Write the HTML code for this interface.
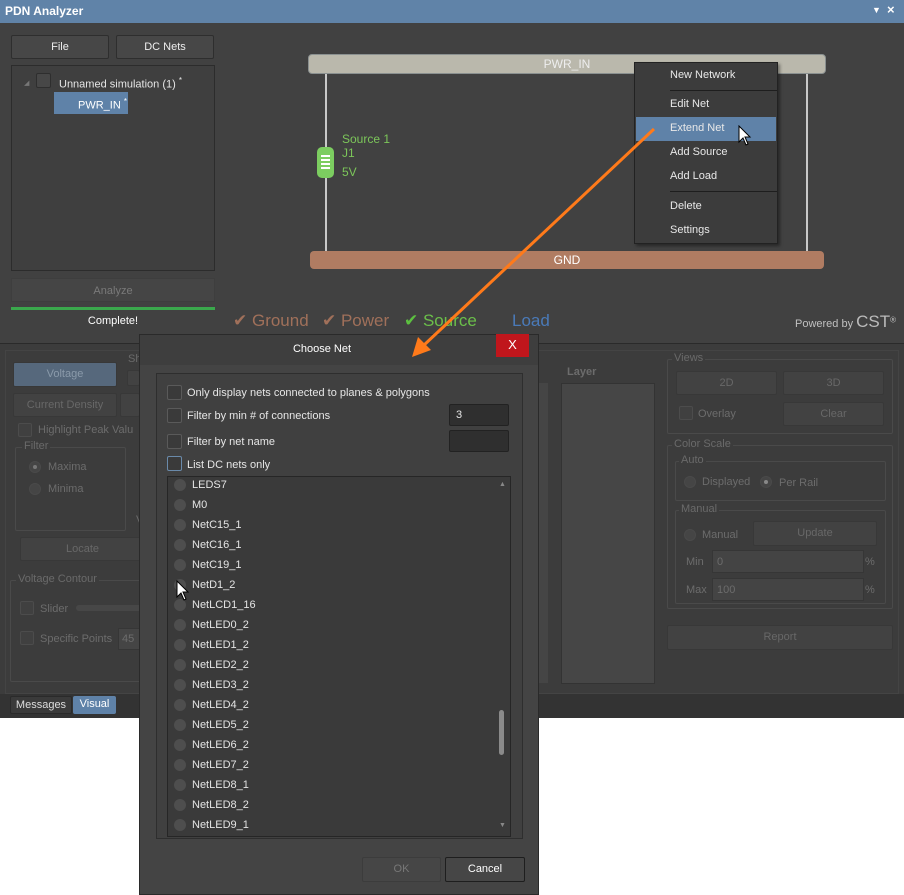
<!DOCTYPE html>
<html><head><style>
*{box-sizing:border-box;margin:0;padding:0}
body{width:904px;height:895px;background:#fff;position:relative;overflow:hidden;font-family:"Liberation Sans",sans-serif;font-size:11px;color:#e6e6e6}
.a{position:absolute}
.btn{position:absolute;background:#474747;border:1px solid #2e2e2e;border-radius:2px;text-align:center;color:#eee;font-size:11px}
.d{color:#6c6c6c}
.dbtn{position:absolute;background:#424242;border:1px solid #383838;border-radius:2px;text-align:center;color:#686868;font-size:11px}
.grp{position:absolute;border:1px solid #4a4a4a;border-radius:2px}
.lg{position:absolute;background:#3c3c3c;padding:0 2px;color:#6a6a6a}
.cb{position:absolute;width:14px;height:14px;border:1px solid #4c4c4c;background:#404040;border-radius:2px}
.rd{position:absolute;width:12px;height:12px;border-radius:50%;background:#454545;border:1px solid #4a4a4a}
.mi{position:absolute;left:36px;color:#e8e8e8;font-size:11px}
.li{position:absolute;left:5px;height:20px;width:300px;color:#e4e4e4;font-size:11px;line-height:20px}
.li i{position:absolute;left:1px;top:4px;width:12px;height:12px;border-radius:50%;background:#4e4e4e}
.li span{position:absolute;left:19px}
.dcb{position:absolute;width:15px;height:15px;border:1px solid #5a5a5a;background:#3a3a3a;border-radius:2px}
</style></head><body>
<!-- title -->
<div class="a" style="left:0;top:0;width:904px;height:23px;background:#6083a8"></div>
<div class="a" style="left:5px;top:4px;font-weight:bold;font-size:12px;color:#fff">PDN Analyzer</div>
<div class="a" style="left:872px;top:5px;font-size:9px;color:#fff">▼</div>
<div class="a" style="left:887px;top:2px;font-size:13px;color:#fff;font-weight:bold">×</div>
<!-- main -->
<div class="a" style="left:0;top:23px;width:904px;height:320px;background:#414141"></div>
<div class="btn" style="left:11px;top:35px;width:98px;height:24px;line-height:22px">File</div>
<div class="btn" style="left:116px;top:35px;width:98px;height:24px;line-height:22px">DC Nets</div>
<div class="a" style="left:11px;top:65px;width:204px;height:206px;border:1px solid #2c2c2c;background:#3f3f3f"></div>
<div class="a" style="left:24px;top:79px;font-size:7px;color:#777">◢</div>
<div class="a" style="left:36px;top:73px;width:15px;height:15px;border:1px solid #2e2e2e;background:#474747;border-radius:2px"></div>
<div class="a" style="left:59px;top:76px;font-size:11px">Unnamed simulation (1) <sup style="font-size:8px">*</sup></div>
<div class="a" style="left:54px;top:92px;width:74px;height:22px;background:#5f82a8"></div>
<div class="a" style="left:78px;top:97px;color:#fff">PWR_IN <sup style="font-size:8px">*</sup></div>
<div class="a" style="left:11px;top:278px;width:204px;height:24px;background:#454545;border:1px solid #3e3e3e;text-align:center;line-height:24px;color:#7a7a7a">Analyze</div>
<div class="a" style="left:11px;top:307px;width:204px;height:3px;background:#3aa84c"></div>
<div class="a" style="left:0;top:315px;width:226px;text-align:center;color:#fff;font-size:11px">Complete!</div>
<!-- diagram -->
<div class="a" style="left:308px;top:54px;width:518px;height:20px;background:#bab8ac;border:1px solid #8a9090;border-radius:4px;text-align:center;color:#eee;line-height:18px;font-size:12px">PWR_IN</div>
<div class="a" style="left:325px;top:74px;width:2px;height:178px;background:#c8c8c8"></div>
<div class="a" style="left:806px;top:74px;width:2px;height:178px;background:#c8c8c8"></div>
<div class="a" style="left:310px;top:251px;width:514px;height:18px;background:#b07c62;border-radius:4px;text-align:center;color:#fff;line-height:18px;font-size:12px">GND</div>
<div class="a" style="left:317px;top:147px;width:17px;height:31px;background:#7ccd60;border-radius:5px"></div>
<div class="a" style="left:321px;top:155px;width:9px;height:2px;background:#fff;box-shadow:0 4px 0 #fff,0 8px 0 #fff,0 12px 0 #fff"></div>
<div class="a" style="left:342px;top:132px;color:#7cc65a;font-size:12px;line-height:14px">Source 1<br>J1</div>
<div class="a" style="left:342px;top:165px;color:#7cc65a;font-size:12px">5V</div>
<!-- legend -->
<div class="a" style="left:233px;top:311px;font-size:17px;color:#a0705a">✔ Ground</div>
<div class="a" style="left:322px;top:311px;font-size:17px;color:#a0705a">✔ Power</div>
<div class="a" style="left:404px;top:311px;font-size:17px;color:#6bbf4a"><span style="color:#5cc040">✔</span> Source</div>
<div class="a" style="left:512px;top:311px;font-size:17px;color:#4a7ab8">Load</div>
<div class="a" style="left:795px;top:312px;font-size:11px;color:#c0c0c0">Powered by <span style="font-size:17px;color:#bbb">CST</span><sup style="font-size:8px">®</sup></div>
<!-- context menu -->
<div class="a" style="left:634px;top:62px;width:144px;height:182px;background:#3c3c3c;border:1px solid #222;box-shadow:2px 2px 3px rgba(0,0,0,.4)"></div>
<div class="a" style="left:670px;top:90px;width:107px;height:1px;background:#1e1e1e"></div>
<div class="a" style="left:670px;top:191px;width:107px;height:1px;background:#1e1e1e"></div>
<div class="a" style="left:636px;top:117px;width:140px;height:24px;background:#5f82a8"></div>
<div class="a" style="left:634px;top:64px;width:144px">
<div class="mi" style="top:5px">New Network</div>
<div class="mi" style="top:34px">Edit Net</div>
<div class="mi" style="top:58px">Extend Net</div>
<div class="mi" style="top:82px">Add Source</div>
<div class="mi" style="top:106px">Add Load</div>
<div class="mi" style="top:136px">Delete</div>
<div class="mi" style="top:160px">Settings</div>
</div>
<svg class="a" style="left:738px;top:125px" width="14" height="22"><path d="M1 1 L1 17 L5 13 L8 20 L10 19 L7 12 L12 12 Z" fill="#fff" stroke="#000" stroke-width="1"/></svg>
<!-- lower dimmed panel -->
<div class="a" style="left:0;top:343px;width:904px;height:375px;background:#3c3c3c;border-top:1px solid #2a2a2a"></div>
<div class="a" style="left:5px;top:350px;width:894px;height:344px;border:1px solid #444"></div>
<div class="dbtn" style="left:13px;top:362px;width:104px;height:25px;line-height:23px;background:#56687c;color:#8a9aaa">Voltage</div>
<div class="dbtn" style="left:13px;top:393px;width:104px;height:24px;line-height:22px">Current Density</div>
<div class="dbtn" style="left:120px;top:393px;width:20px;height:24px"></div>
<div class="dbtn" style="left:127px;top:370px;width:13px;height:16px"></div>
<div class="lg" style="left:126px;top:353px">Sh</div>
<div class="cb" style="left:18px;top:423px"></div>
<div class="a d" style="left:38px;top:424px">Highlight Peak Valu</div>
<div class="grp" style="left:15px;top:447px;width:111px;height:84px"></div>
<div class="lg" style="left:22px;top:440px">Filter</div>
<div class="rd" style="left:29px;top:461px"></div><div class="a" style="left:33px;top:465px;width:4px;height:4px;border-radius:50%;background:#777"></div>
<div class="a d" style="left:48px;top:461px">Maxima</div>
<div class="rd" style="left:29px;top:483px"></div>
<div class="a d" style="left:48px;top:483px">Minima</div>
<div class="a d" style="left:136px;top:514px">V</div>
<div class="dbtn" style="left:20px;top:537px;width:125px;height:24px;line-height:22px">Locate</div>
<div class="grp" style="left:10px;top:580px;width:135px;height:102px"></div>
<div class="lg" style="left:16px;top:573px">Voltage Contour</div>
<div class="cb" style="left:20px;top:601px"></div>
<div class="a d" style="left:40px;top:603px">Slider</div>
<div class="a" style="left:76px;top:605px;width:70px;height:6px;background:#474747;border-radius:3px"></div>
<div class="cb" style="left:20px;top:631px"></div>
<div class="a d" style="left:40px;top:633px">Specific Points</div>
<div class="a" style="left:118px;top:628px;width:30px;height:22px;background:#454545;border:1px solid #363636;color:#6c6c6c;padding:4px 3px">45</div>
<div class="a" style="left:538px;top:383px;width:10px;height:300px;background:#454545"></div>
<div class="a d" style="left:567px;top:366px;font-weight:bold">Layer</div>
<div class="a" style="left:561px;top:383px;width:94px;height:301px;background:#464646;border:1px solid #333"></div>
<div class="grp" style="left:667px;top:359px;width:226px;height:75px"></div>
<div class="lg" style="left:672px;top:352px">Views</div>
<div class="dbtn" style="left:676px;top:371px;width:101px;height:24px;line-height:22px">2D</div>
<div class="dbtn" style="left:783px;top:371px;width:101px;height:24px;line-height:22px">3D</div>
<div class="cb" style="left:679px;top:406px"></div>
<div class="a d" style="left:698px;top:408px">Overlay</div>
<div class="dbtn" style="left:783px;top:402px;width:101px;height:24px;line-height:22px">Clear</div>
<div class="grp" style="left:667px;top:445px;width:226px;height:164px"></div>
<div class="lg" style="left:672px;top:438px">Color Scale</div>
<div class="grp" style="left:675px;top:461px;width:211px;height:40px"></div>
<div class="lg" style="left:679px;top:454px">Auto</div>
<div class="rd" style="left:684px;top:476px"></div>
<div class="a d" style="left:702px;top:476px">Displayed</div>
<div class="rd" style="left:760px;top:476px"></div><div class="a" style="left:764px;top:480px;width:4px;height:4px;border-radius:50%;background:#888"></div>
<div class="a d" style="left:779px;top:477px">Per Rail</div>
<div class="grp" style="left:675px;top:510px;width:211px;height:94px"></div>
<div class="lg" style="left:679px;top:503px">Manual</div>
<div class="rd" style="left:684px;top:529px"></div>
<div class="a d" style="left:702px;top:529px">Manual</div>
<div class="dbtn" style="left:753px;top:521px;width:124px;height:25px;line-height:23px">Update</div>
<div class="a d" style="left:686px;top:556px">Min</div>
<div class="a" style="left:712px;top:550px;width:152px;height:23px;background:#444;border:1px solid #363636;color:#6c6c6c;padding:5px 4px">0</div>
<div class="a d" style="left:865px;top:556px">%</div>
<div class="a d" style="left:686px;top:584px">Max</div>
<div class="a" style="left:712px;top:578px;width:152px;height:23px;background:#444;border:1px solid #363636;color:#6c6c6c;padding:5px 4px">100</div>
<div class="a d" style="left:865px;top:584px">%</div>
<div class="dbtn" style="left:667px;top:625px;width:226px;height:25px;line-height:23px">Report</div>
<div class="a" style="left:0;top:694px;width:904px;height:24px;background:#333"></div>
<div class="a" style="left:10px;top:696px;width:62px;height:18px;background:#3a3a3a;border:1px solid #2a2a2a;border-radius:2px;color:#ddd;text-align:center;line-height:16px">Messages</div>
<div class="a" style="left:73px;top:696px;width:43px;height:18px;background:#5f82a8;border-radius:2px;color:#fff;text-align:center;line-height:17px">Visual</div>
<!-- dialog -->
<div class="a" style="left:139px;top:334px;width:400px;height:561px;background:#444;border:1px solid #2a2a2a"></div>
<div class="a" style="left:140px;top:335px;width:398px;height:30px;background:#3e3e3e"></div>
<div class="a" style="left:140px;top:343px;width:364px;text-align:center;color:#fff;font-size:11px">Choose Net</div>
<div class="a" style="left:496px;top:334px;width:33px;height:23px;background:#c0161c;color:#fff;text-align:center;font-size:13px;line-height:22px">X</div>
<div class="a" style="left:156px;top:373px;width:367px;height:466px;border:1px solid #2e2e2e;background:#404040"></div>
<div class="dcb" style="left:167px;top:385px"></div><div class="a" style="left:187px;top:387px">Only display nets connected to planes &amp; polygons</div>
<div class="dcb" style="left:167px;top:408px"></div><div class="a" style="left:187px;top:410px">Filter by min # of connections</div>
<div class="a" style="left:449px;top:404px;width:60px;height:22px;background:#2f2f2f;border:1px solid #222;border-radius:2px;padding:4px 6px">3</div>
<div class="dcb" style="left:167px;top:434px"></div><div class="a" style="left:187px;top:436px">Filter by net name</div>
<div class="a" style="left:449px;top:430px;width:60px;height:22px;background:#2f2f2f;border:1px solid #222;border-radius:2px"></div>
<div class="dcb" style="left:167px;top:456px;border-color:#6a8aaa"></div><div class="a" style="left:187px;top:459px">List DC nets only</div>
<div class="a" style="left:167px;top:476px;width:344px;height:361px;background:#3a3a3a;border:1px solid #262626;overflow:hidden">
<div class="li" style="top:-2px"><i></i><span>LEDS7</span></div>
<div class="li" style="top:18px"><i></i><span>M0</span></div>
<div class="li" style="top:38px"><i></i><span>NetC15_1</span></div>
<div class="li" style="top:58px"><i></i><span>NetC16_1</span></div>
<div class="li" style="top:78px"><i></i><span>NetC19_1</span></div>
<div class="li" style="top:98px"><i></i><span>NetD1_2</span></div>
<div class="li" style="top:118px"><i></i><span>NetLCD1_16</span></div>
<div class="li" style="top:138px"><i></i><span>NetLED0_2</span></div>
<div class="li" style="top:158px"><i></i><span>NetLED1_2</span></div>
<div class="li" style="top:178px"><i></i><span>NetLED2_2</span></div>
<div class="li" style="top:198px"><i></i><span>NetLED3_2</span></div>
<div class="li" style="top:218px"><i></i><span>NetLED4_2</span></div>
<div class="li" style="top:238px"><i></i><span>NetLED5_2</span></div>
<div class="li" style="top:258px"><i></i><span>NetLED6_2</span></div>
<div class="li" style="top:278px"><i></i><span>NetLED7_2</span></div>
<div class="li" style="top:298px"><i></i><span>NetLED8_1</span></div>
<div class="li" style="top:318px"><i></i><span>NetLED8_2</span></div>
<div class="li" style="top:338px"><i></i><span>NetLED9_1</span></div>
<div class="a" style="left:331px;top:4px;font-size:7px;color:#888">▲</div>
<div class="a" style="left:331px;top:345px;font-size:7px;color:#888">▼</div>
<div class="a" style="left:331px;top:233px;width:5px;height:45px;background:#8a8a8a;border-radius:3px"></div>
</div>
<svg class="a" style="left:176px;top:580px" width="14" height="22"><path d="M1 1 L1 17 L5 13 L8 20 L10 19 L7 12 L12 12 Z" fill="#fff" stroke="#000" stroke-width="1"/></svg>
<div class="a" style="left:362px;top:857px;width:79px;height:25px;background:#464646;border:1px solid #3c3c3c;border-radius:2px;color:#777;text-align:center;line-height:23px">OK</div>
<div class="a" style="left:445px;top:857px;width:80px;height:25px;background:#464646;border:1px solid #1e1e1e;border-radius:2px;color:#fff;text-align:center;line-height:23px">Cancel</div>
<!-- arrow -->
<svg class="a" style="left:0;top:0" width="904" height="895"><line x1="654" y1="129" x2="423" y2="346" stroke="#ff7a1a" stroke-width="3"/><path d="M412 357 L418 337 L431 350 Z" fill="#ff7a1a"/></svg>
</body></html>
